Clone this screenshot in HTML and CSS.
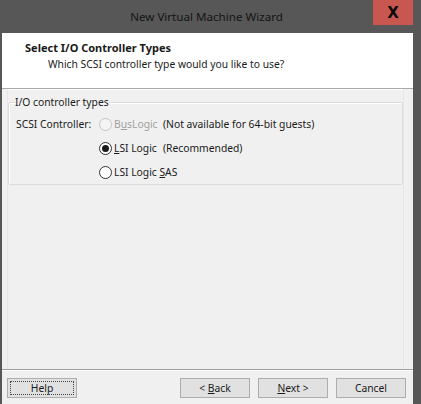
FILE: index.html
```html
<!DOCTYPE html>
<html>
<head>
<meta charset="utf-8">
<link rel="stylesheet" href="styles.css">
</head>
<body>
<div class="window">
  <div class="titlebar">
    <span class="title">New Virtual Machine Wizard</span>
    <div class="close">X</div>
  </div>
  <div class="client">
    <div class="header">
      <div class="h-title">Select I/O Controller Types</div>
      <div class="h-sub">Which SCSI controller type would you like to use?</div>
    </div>
    <div class="body">
      <fieldset class="group">
        <legend>I/O controller types</legend>
        <div class="grid">
          <div class="lbl">SCSI Controller:</div>
          <label class="opt disabled"><span class="radio"></span><span>B<u>u</u>sLogic</span></label>
          <div class="note">(Not available for 64-bit guests)</div>

          <label class="opt"><span class="radio checked"></span><span><u>L</u>SI Logic</span></label>
          <div class="note">(Recommended)</div>

          <label class="opt"><span class="radio"></span><span>LSI Logic <u>S</u>AS</span></label>
        </div>
      </fieldset>
    </div>
    <div class="footer">
      <button class="btn focus"><span>Help</span></button>
      <div class="spacer"></div>
      <button class="btn"><span>&lt; <u>B</u>ack</span></button>
      <button class="btn"><span><u>N</u>ext &gt;</span></button>
      <button class="btn"><span>Cancel</span></button>
    </div>
  </div>
</div>
</body>
</html>
```

FILE: styles.css
```css
* { box-sizing: border-box; }
html, body { margin: 0; padding: 0; }
body {
  font-family: "Noto Sans", "Open Sans", sans-serif;
  font-size: 10.3px;
  color: #1a1a1a;
  background: #595959;
}
u { text-underline-offset: 1px; }
.window {
  width: 421px;
  height: 404px;
  background: #575757;
  display: flex;
  flex-direction: column;
  padding: 0 8px 0 2px;
}
.titlebar {
  height: 33px;
  position: relative;
  display: flex;
  align-items: center;
  justify-content: center;
  flex: none;
}
.title {
  font-size: 11.6px;
  color: #141414;
  margin-left: -2px;
}
.close {
  position: absolute;
  right: 0;
  top: 0;
  width: 40px;
  height: 25px;
  background: #c8584f;
  color: #0d0d0d;
  font-family: "DejaVu Sans", sans-serif;
  font-weight: bold;
  font-size: 15px;
  display: flex;
  align-items: center;
  justify-content: center;
  padding-top: 1px;
}
.client {
  flex: 1;
  background: #f0f0f0;
  display: flex;
  flex-direction: column;
}
.header {
  background: #fff;
  height: 56px;
  border-bottom: 1px solid #a9a9a9;
  padding: 7px 0 0 23px;
  flex: none;
}
.h-title {
  font-weight: bold;
  font-size: 11px;
  line-height: 16px;
}
.h-sub {
  margin-left: 23px;
  line-height: 16px;
}
.body {
  flex: 1;
  border-top: 1px solid #fff;
  margin: 0 9px 0 5px;
  border-left: 1px solid #e6e6e6;
  border-right: 1px solid #e6e6e6;
  padding: 5px 0 0 0;
}
.group {
  margin: 0;
  padding: 0 0 0 7px;
  height: 90px;
  border: 1px solid #dcdcdc;
  box-shadow: inset 1px 1px 0 #fff;
  border-radius: 2px;
}
.group legend {
  padding: 0;
  margin-left: -1px;
  line-height: 14px;
}
.grid {
  display: grid;
  grid-template-columns: 83px 64px auto;
  grid-auto-rows: 24px;
  align-items: center;
  margin-top: 3px;
}
.lbl { grid-column: 1; white-space: nowrap; }
.opt {
  grid-column: 2;
  display: flex;
  align-items: center;
  gap: 2px;
  white-space: nowrap;
}
.note { grid-column: 3; white-space: nowrap; }
.opt.disabled { color: #a0a0a0; }
.radio {
  width: 13px;
  height: 13px;
  border-radius: 50%;
  border: 1px solid #333;
  background: #fff;
  display: flex;
  align-items: center;
  justify-content: center;
  flex: none;
}
.disabled .radio { border-color: #c4c4c4; background: #f4f4f4; }
.radio.checked::after {
  content: "";
  width: 7px;
  height: 7px;
  border-radius: 50%;
  background: #1a1a1a;
}
.footer {
  flex: none;
  height: 35px;
  border-top: 1px solid #a0a0a0;
  box-shadow: inset 0 1px 0 #fff;
  display: flex;
  align-items: flex-start;
  padding: 8px 7px 0 5px;
  gap: 8px;
}
.spacer { flex: 1; }
.btn {
  width: 70px;
  height: 20px;
  background: #e1e1e1;
  border: 1px solid #adadad;
  font-family: inherit;
  font-size: 10.3px;
  color: #1a1a1a;
  padding: 0;
  margin: 0;
  display: flex;
  align-items: center;
  justify-content: center;
}
.btn span { white-space: pre; }
.btn.focus { padding: 2px; }
.btn.focus span {
  flex: 1;
  align-self: stretch;
  border: 1px dotted #444;
  display: flex;
  align-items: center;
  justify-content: center;
}
```
